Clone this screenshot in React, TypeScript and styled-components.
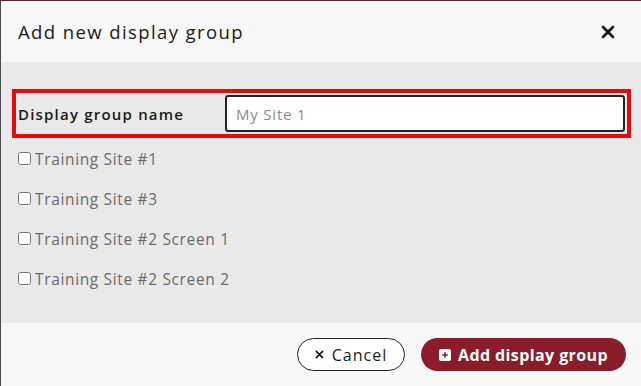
import React from 'react';
import styled, { createGlobalStyle } from 'styled-components';

const GlobalStyle = createGlobalStyle`
  html, body {
    margin: 0;
    padding: 0;
    background: #4b4b4b;
    font-family: 'Open Sans', 'Liberation Sans', sans-serif;
  }
  * { box-sizing: border-box; }
`;

const Backdrop = styled.div`
  width: 641px;
  height: 386px;
  padding: 1px 0 0 1px;
  background: linear-gradient(to bottom, #5a2030 0, #5a2030 1px, #4b4b4b 1px);
  overflow: hidden;
`;

const Modal = styled.div`
  width: 640px;
  height: 385px;
  display: flex;
  flex-direction: column;
  background: #f7f7f7;
`;

const Header = styled.div`
  height: 61px;
  display: flex;
  align-items: center;
  justify-content: space-between;
  padding: 0 26px 0 17px;
`;

const Title = styled.h2`
  margin: 0;
  font-size: 18.5px;
  font-weight: 500;
  color: #1a1a1a;
  letter-spacing: 1.4px;
`;

const CloseButton = styled.button`
  border: 0;
  background: none;
  padding: 0;
  width: 14px;
  height: 14px;
  display: flex;
  cursor: pointer;
`;

const Body = styled.div`
  flex: 1;
  background: #e9e9e9;
  padding: 27px 10px 24px 11px;
  display: flex;
  flex-direction: column;
`;

const NameRow = styled.div`
  height: 49px;
  border: 4px solid #e60a0a;
  display: flex;
  align-items: center;
  justify-content: space-between;
  padding: 0 2px;
`;

const Label = styled.label`
  font-size: 15px;
  font-weight: 600;
  color: #1a1a1a;
  letter-spacing: 1.2px;
`;

const NameInput = styled.input`
  width: 400px;
  height: 37px;
  border: 2px solid #222;
  border-radius: 3px;
  background: #fff;
  padding: 0 9px;
  font-family: inherit;
  font-size: 15px;
  letter-spacing: 0.8px;
  color: #222;
  outline: none;
  &::placeholder {
    color: #8a8a8a;
  }
`;

const CheckRow = styled.label`
  height: 40px;
  display: flex;
  align-items: center;
  gap: 4px;
  padding-left: 6px;
  padding-top: 1px;
  font-size: 15.5px;
  color: #6a6a6a;
  letter-spacing: 0.65px;
`;

const CheckBox = styled.input`
  margin: 0;
  width: 13px;
  height: 13px;
`;

const Footer = styled.div`
  height: 63px;
  display: flex;
  align-items: center;
  justify-content: flex-end;
  gap: 16px;
  padding: 0 15px 0 0;
`;

const Button = styled.button<{ $primary?: boolean }>`
  height: 33px;
  border-radius: 17px;
  display: flex;
  align-items: center;
  justify-content: center;
  gap: ${(p) => (p.$primary ? '7px' : '8px')};
  font-family: inherit;
  font-size: 16px;
  letter-spacing: ${(p) => (p.$primary ? '0.4px' : '1px')};
  cursor: pointer;
  width: ${(p) => (p.$primary ? '205px' : '108px')};
  border: ${(p) => (p.$primary ? '0' : '1px solid #222')};
  background: ${(p) => (p.$primary ? '#8b1c29' : '#fff')};
  color: ${(p) => (p.$primary ? '#fff' : '#1a1a1a')};
  font-weight: ${(p) => (p.$primary ? 700 : 500)};
`;

const sites = [
  'Training Site #1',
  'Training Site #3',
  'Training Site #2 Screen 1',
  'Training Site #2 Screen 2',
];

export default function App() {
  return (
    <Backdrop>
      <GlobalStyle />
      <Modal>
        <Header>
          <Title>Add new display group</Title>
          <CloseButton aria-label="Close">
            <svg width="14" height="14" viewBox="0 0 14 14">
              <path d="M2 2 L12 12 M12 2 L2 12" stroke="#111" strokeWidth="2.6" strokeLinecap="round" />
            </svg>
          </CloseButton>
        </Header>
        <Body>
          <NameRow>
            <Label htmlFor="group-name">Display group name</Label>
            <NameInput id="group-name" placeholder="My Site 1" />
          </NameRow>
          {sites.map((s) => (
            <CheckRow key={s}>
              <CheckBox type="checkbox" />
              {s}
            </CheckRow>
          ))}
        </Body>
        <Footer>
          <Button>
            <svg width="9" height="9" viewBox="0 0 10 10">
              <path d="M1.5 1.5 L8.5 8.5 M8.5 1.5 L1.5 8.5" stroke="#111" strokeWidth="1.8" strokeLinecap="round" />
            </svg>
            Cancel
          </Button>
          <Button $primary>
            <svg width="12" height="12" viewBox="0 0 12 12">
              <rect x="0" y="0" width="12" height="12" rx="2" fill="#fff" />
              <path d="M6 3.2 V8.8 M3.2 6 H8.8" stroke="#8b1c29" strokeWidth="1.6" />
            </svg>
            Add display group
          </Button>
        </Footer>
      </Modal>
    </Backdrop>
  );
}
